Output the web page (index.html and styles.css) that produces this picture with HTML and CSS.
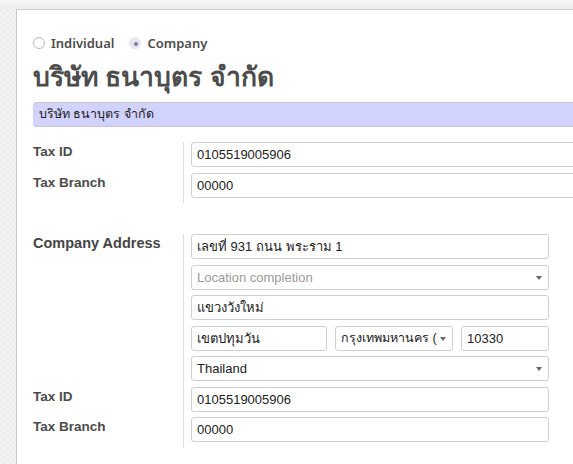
FILE: index.html
```html
<!DOCTYPE html>
<html>
<head>
<meta charset="utf-8">
<link rel="stylesheet" href="styles.css">
</head>
<body>
<div class="topbar"></div>
<div class="sheet">
  <div class="radios">
    <label class="radio"><span class="dot"></span>Individual</label>
    <label class="radio checked"><span class="dot"></span>Company</label>
  </div>
  <h1 class="title">บริษัท ธนาบุตร จำกัด</h1>
  <div class="name-input">บริษัท ธนาบุตร จำกัด</div>

  <div class="group wide">
    <div class="lbl">Tax ID</div>
    <div class="fld"><div class="inp">0105519005906</div></div>
    <div class="lbl">Tax Branch</div>
    <div class="fld last"><div class="inp">00000</div></div>
  </div>

  <div class="group narrow">
    <div class="lbl strong">Company Address</div>
    <div class="fld"><div class="inp">เลขที่ 931 ถนน พระราม 1</div></div>
    <div class="lbl"></div>
    <div class="fld"><div class="inp select placeholder">Location completion<span class="caret"></span></div></div>
    <div class="lbl"></div>
    <div class="fld"><div class="inp">แขวงวังใหม่</div></div>
    <div class="lbl"></div>
    <div class="fld">
      <div class="row3">
        <div class="inp city">เขตปทุมวัน</div>
        <div class="inp select state"><span class="clip">กรุงเทพมหานคร (ก</span><span class="caret"></span></div>
        <div class="inp zip">10330</div>
      </div>
    </div>
    <div class="lbl"></div>
    <div class="fld"><div class="inp select">Thailand<span class="caret"></span></div></div>
    <div class="lbl">Tax ID</div>
    <div class="fld"><div class="inp">0105519005906</div></div>
    <div class="lbl">Tax Branch</div>
    <div class="fld last"><div class="inp">00000</div></div>
  </div>
</div>
</body>
</html>
```
FILE: styles.css
```css
html, body {
  margin: 0;
  padding: 0;
  overflow: hidden;
}
body {
  width: 573px;
  height: 464px;
  font-family: "Liberation Sans", Arial, sans-serif;
  color: #4c4c4c;
  background-color: #f4f4f4;
  background-image:
    linear-gradient(45deg, #ececec 25%, transparent 25%, transparent 75%, #ececec 75%),
    linear-gradient(45deg, #ececec 25%, transparent 25%, transparent 75%, #ececec 75%);
  background-size: 6px 6px;
  background-position: 0 0, 3px 3px;
}
.topbar {
  height: 9px;
  background: linear-gradient(#f6f6f6, #ededed);
}
.sheet {
  margin-left: 16px;
  width: 700px;
  height: 460px;
  background: #fff;
  border-top: 1px solid #cbc9d3;
  border-left: 1px solid #cbc9d3;
  box-sizing: border-box;
  padding: 25px 0 0 16px;
}
.radios {
  display: flex;
  align-items: center;
  gap: 15px;
  height: 16px;
}
.radio {
  display: flex;
  align-items: center;
  gap: 6px;
  font-family: "Noto Sans", "Open Sans", sans-serif;
  font-size: 13px;
  font-weight: 600;
  color: #4c4c4c;
}
.dot {
  width: 10px;
  height: 10px;
  border: 1px solid #b6b6c2;
  border-radius: 50%;
  background: #fff;
  position: relative;
}
.checked .dot {
  background: #e7e7ee;
  border-color: #e7e7ee;
}
.checked .dot::after {
  content: "";
  position: absolute;
  left: 3.5px;
  top: 3.5px;
  width: 4px;
  height: 4px;
  border-radius: 50%;
  background: #7f7bb1;
}
.title {
  margin: 9px 0 0 0;
  height: 34px;
  font-size: 26.5px;
  line-height: 34px;
  font-weight: bold;
  color: #4c4c4c;
  white-space: nowrap;
}
.name-input {
  margin-top: 8px;
  height: 25px;
  box-sizing: border-box;
  background: #d2d2ff;
  border-top: 1px solid #c8c8c8;
  border-bottom: 1px solid #c8c8c8;
  border-left: 1px solid #d2d2ff;
  border-radius: 3px 0 0 3px;
  padding-left: 5px;
  font-size: 12.5px;
  line-height: 23px;
  color: #222;
  white-space: nowrap;
}
.group {
  display: grid;
  grid-template-columns: 150px 366px;
}
.group.wide {
  margin-top: 15px;
  grid-template-columns: 150px 420px;
}
.group.narrow {
  margin-top: 31px;
}
.lbl {
  font-size: 13.5px;
  font-weight: bold;
  line-height: 15px;
  padding-top: 2px;
  color: #4c4c4c;
  white-space: nowrap;
}
.lbl.strong {
  font-size: 14.5px;
  font-weight: bold;
  color: #444;
}
.fld {
  border-left: 1px solid #dcdcdc;
  padding-left: 7px;
  padding-bottom: 5.5px;
}
.inp {
  height: 25px;
  box-sizing: border-box;
  border: 1px solid #cfcfcf;
  border-radius: 3px;
  padding-left: 5px;
  font-size: 13px;
  line-height: 23px;
  color: #222;
  white-space: nowrap;
  overflow: hidden;
  position: relative;
}
.placeholder {
  color: #9a9a9a;
}
.select {
  padding-right: 16px;
}
.caret {
  position: absolute;
  right: 6px;
  top: 10px;
  width: 0;
  height: 0;
  border-left: 3.5px solid transparent;
  border-right: 3.5px solid transparent;
  border-top: 4px solid #666;
}
.row3 {
  display: flex;
  gap: 8px;
}
.city {
  width: 136px;
}
.state {
  width: 118px;
  padding-right: 14px;
}
.state .clip {
  display: block;
  overflow: hidden;
  font-size: 12.5px;
}
.zip {
  flex: 1;
}
```
